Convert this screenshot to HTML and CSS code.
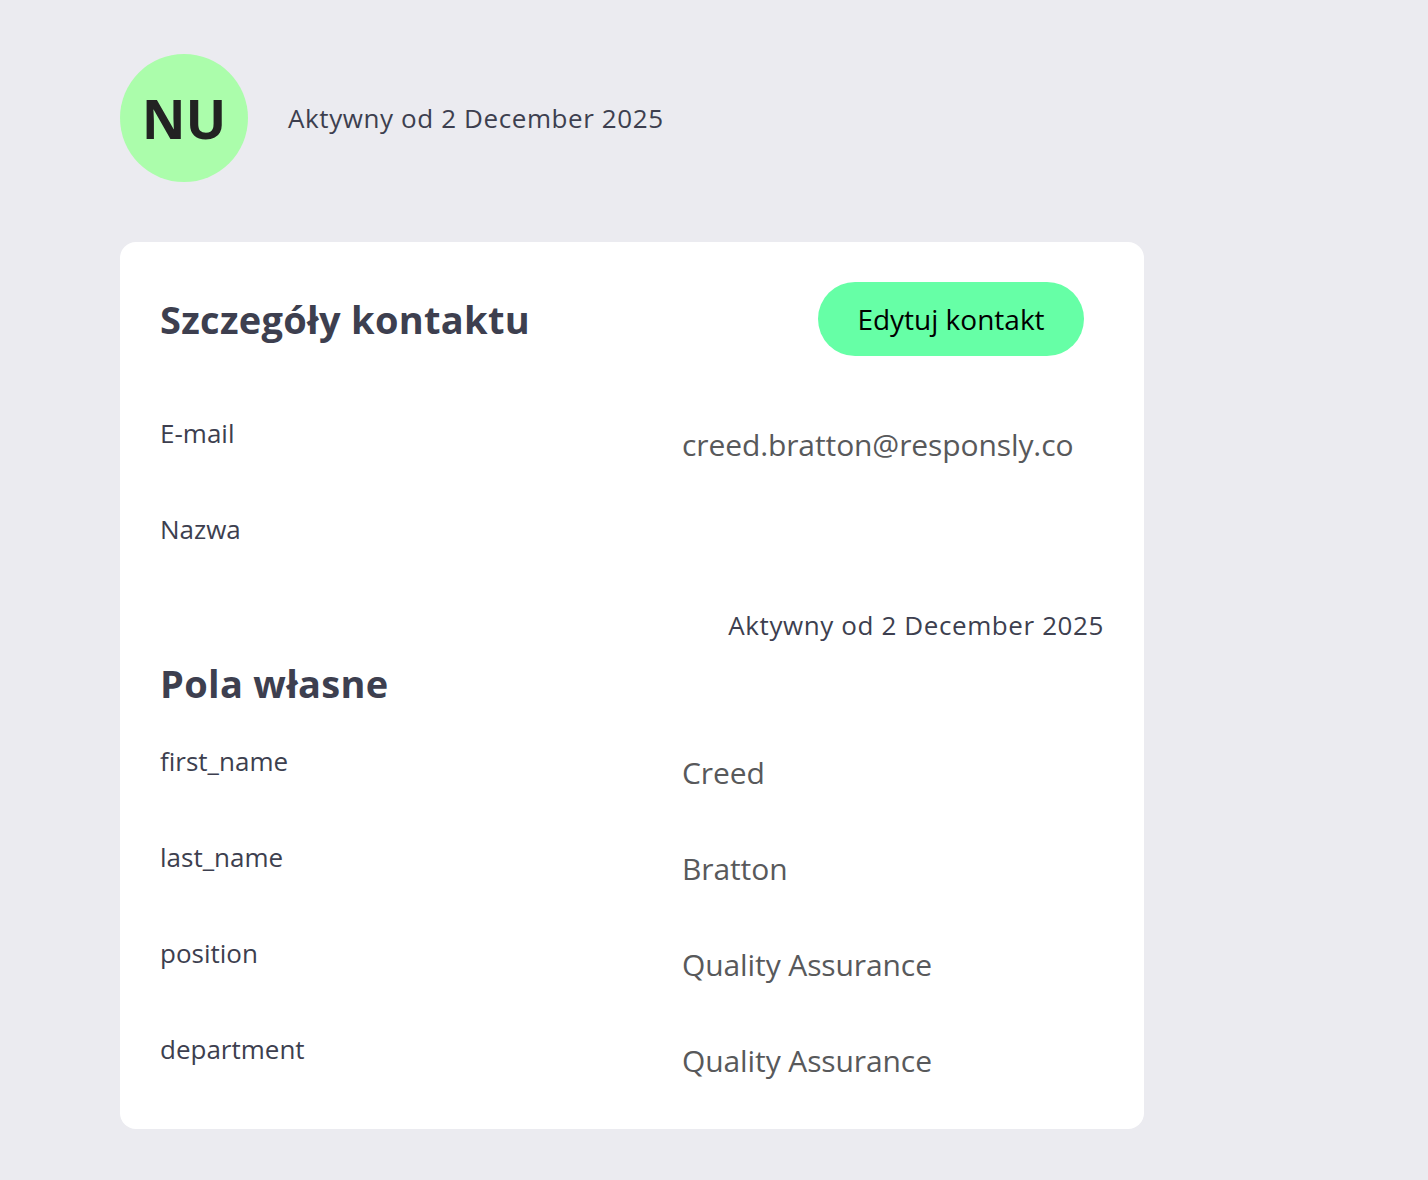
FILE: index.html
```html
<!DOCTYPE html>
<html lang="pl">
<head>
    <meta charset="UTF-8">
    <meta name="viewport" content="width=device-width, initial-scale=1.0">
    <title>Kontakt - Creed Bratton</title>
    <link rel="stylesheet" href="styles.css">
</head>
<body>
    <div class="profile-head">
        <div class="avatar">NU</div>
        <div class="since">Aktywny od 2 December 2025</div>
    </div>

    <div class="card">
        <div class="card-header">
            <h2>Szczegóły kontaktu</h2>
            <button class="btn">Edytuj kontakt</button>
        </div>

        <div class="row">
            <div class="label">E-mail</div>
            <div class="value">creed.bratton@responsly.co</div>
        </div>
        <div class="row">
            <div class="label">Nazwa</div>
            <div class="value"></div>
        </div>
        <div class="since since-card">Aktywny od 2 December 2025</div>

        <!-- Custom fields -->
        <h2 class="section-title">Pola własne</h2>
        <div class="row">
            <div class="label">first_name</div>
            <div class="value">Creed</div>
        </div>
        <div class="row">
            <div class="label">last_name</div>
            <div class="value">Bratton</div>
        </div>
        <div class="row">
            <div class="label">position</div>
            <div class="value">Quality Assurance</div>
        </div>
        <div class="row">
            <div class="label">department</div>
            <div class="value">Quality Assurance</div>
        </div>
    </div>
</body>
</html>
```

FILE: styles.css
```css
/* General reset */
* {
    margin: 0;
    padding: 0;
    box-sizing: border-box;
}

body {
    font-family: 'Open Sans', 'Liberation Sans', sans-serif;
    background-color: #ebebf0;
    color: #3d3f4f;
    padding: 54px 120px;
}

.profile-head {
    display: flex;
    align-items: center;
    gap: 40px;
    margin-bottom: 60px;
}

.avatar {
    width: 128px;
    height: 128px;
    border-radius: 50%;
    background-color: #abfdab;
    color: #222222;
    font-size: 54px;
    font-weight: 700;
    display: flex;
    align-items: center;
    justify-content: center;
}

.since {
    font-size: 26px;
    line-height: 32px;
    letter-spacing: 0.6px;
}

.card {
    width: 1024px;
    background-color: #ffffff;
    border-radius: 16px;
    padding: 40px;
}

.card-header {
    display: flex;
    align-items: center;
    justify-content: space-between;
    margin-bottom: 61px;
}

.card-header h2 {
    font-size: 38px;
    line-height: 48px;
    font-weight: 700;
    letter-spacing: 0.3px;
}

.btn {
    font-family: inherit;
    width: 266px;
    height: 74px;
    margin-right: 20px;
    border: none;
    border-radius: 37px;
    background-color: #66ffa6;
    color: #000000;
    font-size: 28px;
    cursor: pointer;
}

.row {
    display: grid;
    grid-template-columns: 522px 1fr;
    min-height: 56px;
    margin-bottom: 40px;
}

.row:last-child {
    margin-bottom: 0;
}

.label {
    font-size: 26px;
    line-height: 32px;
}

.value {
    padding-top: 10px;
    font-size: 30px;
    line-height: 36px;
    letter-spacing: -0.1px;
    color: #58595b;
}

.since-card {
    text-align: right;
    margin-bottom: 18px;
}

.section-title {
    font-size: 38px;
    line-height: 48px;
    font-weight: 700;
    letter-spacing: 0.3px;
    margin-bottom: 38px;
}
```
